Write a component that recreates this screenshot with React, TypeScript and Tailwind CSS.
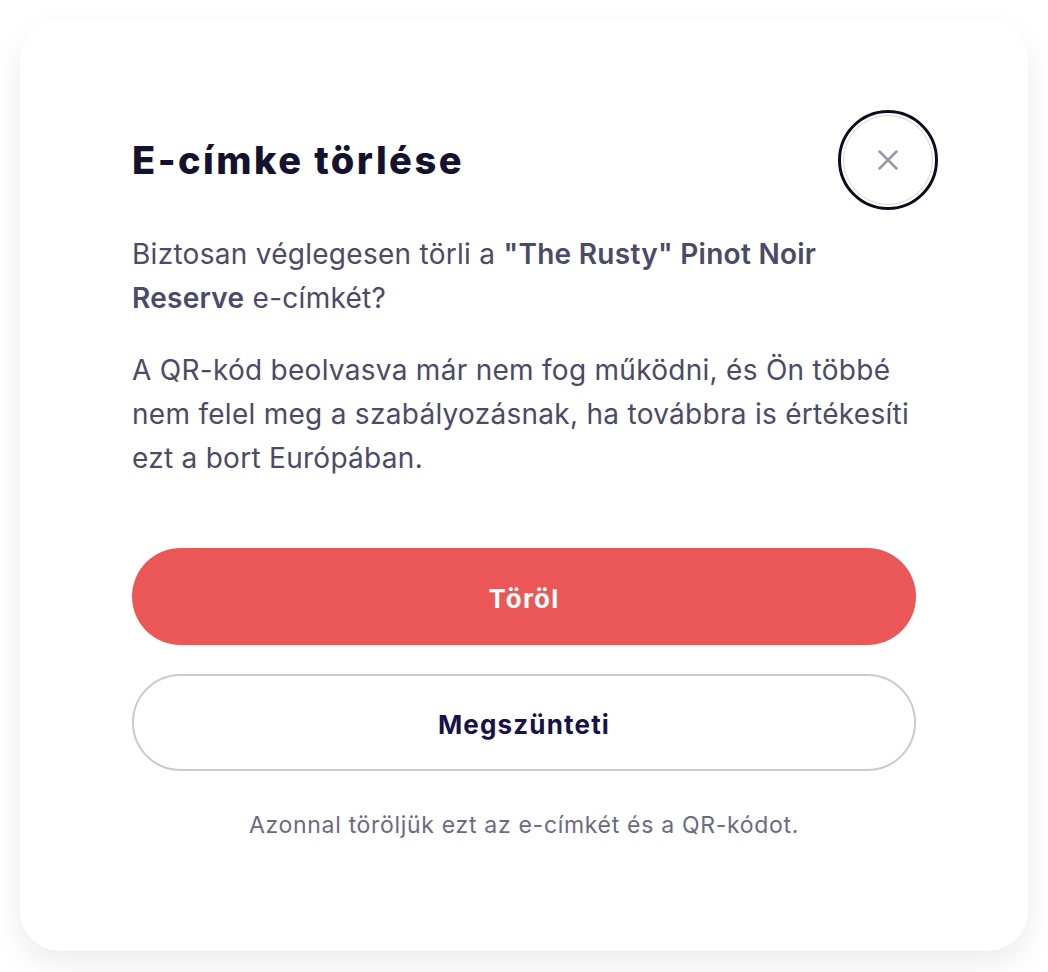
import { X } from "lucide-react";

export default function App() {
  return (
    <div className="min-h-[972px] w-full bg-white px-5 pt-5 font-['Inter',sans-serif]">
      <div className="relative rounded-[40px] bg-white px-[112px] pt-[118px] pb-[110px] shadow-[0_12px_30px_rgba(0,0,0,0.08)]">
        {/* close */}
        <button className="absolute right-[90px] top-[90px] flex h-[100px] w-[100px] items-center justify-center rounded-full border-[3px] border-[#0e0d1f] bg-white">
          <span className="flex h-[90px] w-[90px] items-center justify-center rounded-full border border-[#d6d6dc]">
            <X size={34} strokeWidth={1.8} className="text-[#9a99a6]" />
          </span>
        </button>

        <h2 className="text-[38px] font-extrabold leading-[44px] tracking-[0.065em] text-[#14122e]">
          E-címke törlése
        </h2>

        <p className="mt-[50px] text-[28px] leading-[44px] tracking-[0.01em] text-[#4b4a68]">
          Biztosan véglegesen törli a <span className="font-semibold">"The Rusty" Pinot Noir Reserve</span> e-címkét?
        </p>
        <p className="mt-[28px] text-[28px] leading-[44px] tracking-[0.01em] text-[#4b4a68]">
          A QR-kód beolvasva már nem fog működni, és Ön többé nem felel meg a szabályozásnak, ha továbbra is értékesíti ezt a bort Európában.
        </p>

        <div className="mt-[68px] flex flex-col gap-[29px]">
          <button className="h-[97px] w-full rounded-full bg-[#eb5757] pt-1 text-[26px] font-bold tracking-[0.045em] text-white">
            Töröl
          </button>
          <button className="h-[97px] w-full rounded-full border-2 border-[#c9c9cf] bg-white pt-1 text-[26px] font-bold tracking-[0.045em] text-[#17134a]">
            Megszünteti
          </button>
        </div>

        <p className="mt-[38px] text-center text-[23px] leading-[32px] tracking-[0.03em] text-[#6b6a85]">
          Azonnal töröljük ezt az e-címkét és a QR-kódot.
        </p>
      </div>
    </div>
  );
}
